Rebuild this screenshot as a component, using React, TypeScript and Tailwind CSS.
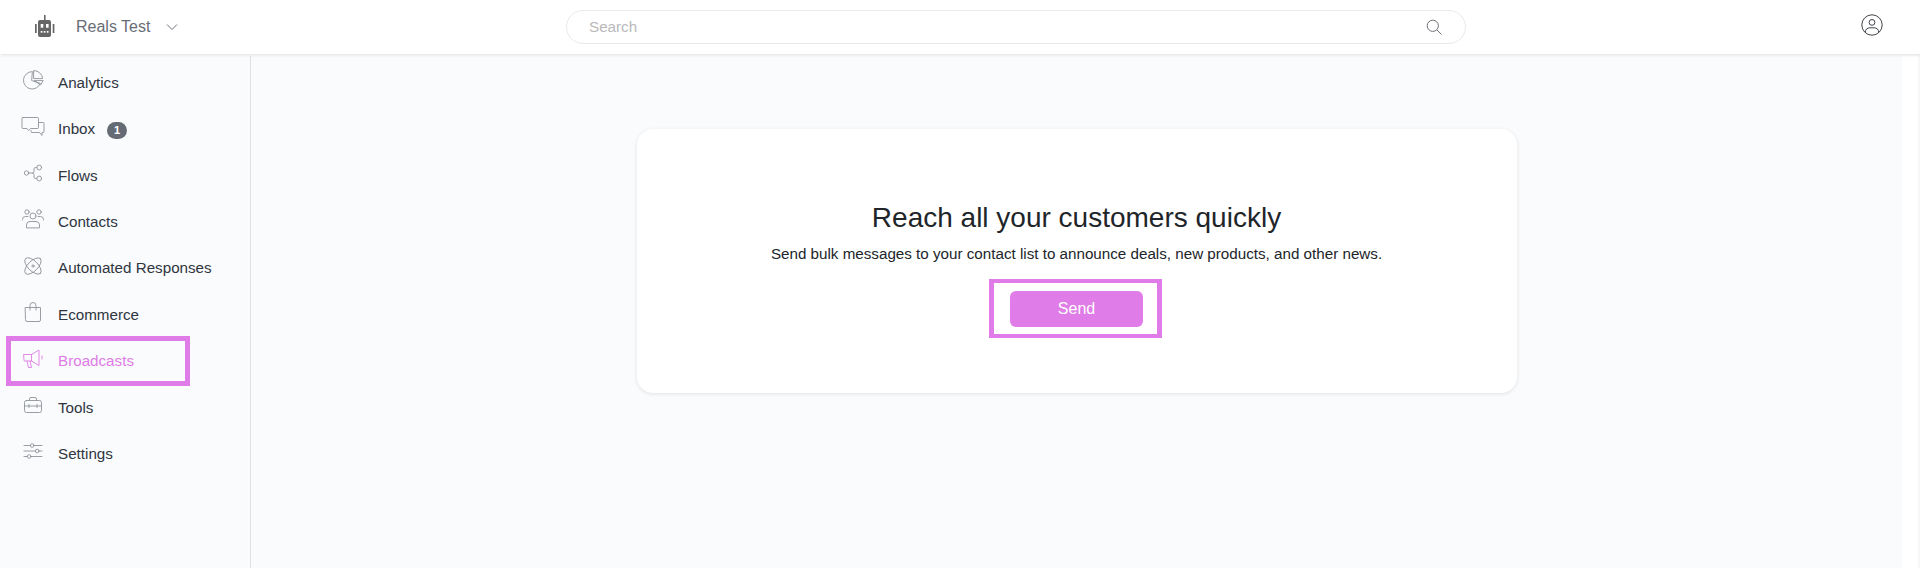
import type { ReactNode } from "react";

const sans = "font-['Liberation_Sans',Arial,sans-serif]";

function Icon({ children, className = "" }: { children: ReactNode; className?: string }) {
  return (
    <svg
      viewBox="0 0 24 24"
      fill="none"
      stroke="currentColor"
      strokeWidth={0.9}
      strokeLinecap="round"
      strokeLinejoin="round"
      className={`w-6 h-6 shrink-0 ${className}`}
    >
      {children}
    </svg>
  );
}

const navItems: { label: string; badge?: string; active?: boolean; icon: ReactNode }[] = [
  {
    label: "Analytics",
    icon: (
      <>
        <path d="M11 3.6A8.7 8.7 0 1 0 19.3 15.4L11 12.6Z" />
        <path d="M13 2.6A8.6 8.6 0 0 1 21.6 10.6H13Z" />
        <path d="M13.4 12.6H22.2L19.8 16.6Z" />
      </>
    ),
  },
  {
    label: "Inbox",
    badge: "1",
    icon: (
      <>
        <path d="M2 2.5H16.5Q17.5 2.5 17.5 3.5V12.5Q17.5 13.5 16.5 13.5H9.5L7.5 15.5L6 13.5H2Q1 13.5 1 12.5V3.5Q1 2.5 2 2.5Z" />
        <path d="M18 7.5H22Q23 7.5 23 8.5V16.5Q23 17.5 22 17.5H21V20.5L18.5 17.5H11Q10 17.5 10 16.5V15.5" />
      </>
    ),
  },
  {
    label: "Flows",
    icon: (
      <>
        <circle cx="5.5" cy="12" r="2.2" />
        <circle cx="18.2" cy="6.5" r="2.4" />
        <circle cx="18.2" cy="17.5" r="2.4" />
        <path d="M7.7 12H11.5Q13 12 13 10.5V8Q13 6.5 14.5 6.5H15.8" />
        <path d="M11.5 12Q13 12 13 13.5V16Q13 17.5 14.5 17.5H15.8" />
      </>
    ),
  },
  {
    label: "Contacts",
    icon: (
      <>
        <circle cx="6" cy="5" r="2.2" />
        <circle cx="18" cy="5" r="2.2" />
        <circle cx="12" cy="9" r="3" />
        <path d="M1.5 13V12.5Q1.5 9.5 4.5 9.5H7" />
        <path d="M22.5 13V12.5Q22.5 9.5 19.5 9.5H17" />
        <path d="M5.5 20.5V18Q5.5 14.5 9 14.5H15Q18.5 14.5 18.5 18V20.5Z" />
      </>
    ),
  },
  {
    label: "Automated Responses",
    icon: (
      <>
        <ellipse cx="12" cy="12" rx="10.5" ry="5" transform="rotate(45 12 12)" />
        <ellipse cx="12" cy="12" rx="10.5" ry="5" transform="rotate(-45 12 12)" />
        <circle cx="12" cy="12" r="1.1" />
      </>
    ),
  },
  {
    label: "Ecommerce",
    icon: (
      <>
        <path d="M4.5 7.5H19.5V20Q19.5 21.5 18 21.5H6Q4.5 21.5 4.5 20Z" />
        <path d="M9 10V5.5Q9 2.5 12 2.5Q15 2.5 15 5.5V10" />
      </>
    ),
  },
  {
    label: "Broadcasts",
    active: true,
    icon: (
      <>
        <path d="M3 7.5H10.5L18 3V18.5L10.5 14H3.5Q3 14 3 13.5Z" />
        <path d="M10.5 7.5V14" />
        <path d="M6 14L7.5 20.5H10.5L9 14" />
        <path d="M21 9V12" />
      </>
    ),
  },
  {
    label: "Tools",
    icon: (
      <>
        <rect x="3.5" y="7.5" width="17" height="12" rx="2" />
        <path d="M8.5 7.5V6Q8.5 4.5 10 4.5H14Q15.5 4.5 15.5 6V7.5" />
        <path d="M3.5 13H20.5" />
        <path d="M8 11.5V14.5M16 11.5V14.5" />
      </>
    ),
  },
  {
    label: "Settings",
    icon: (
      <>
        <path d="M3 6.5H9.5M13 6.5H21" />
        <circle cx="11.2" cy="6.5" r="1.8" />
        <path d="M3 12H14.5M18 12H21" />
        <circle cx="16.2" cy="12" r="1.8" />
        <path d="M3 17.5H6.5M10 17.5H21" />
        <circle cx="8.2" cy="17.5" r="1.8" />
      </>
    ),
  },
];

function Header() {
  return (
    <header className="relative z-10 h-[54px] shrink-0 bg-white shadow-[0_1px_3px_rgba(0,0,0,0.14)] flex items-center pl-[33px] pr-[37px]">
      <div className="flex items-center w-[533px]">
        <svg viewBox="0 0 24 24" className="w-6 h-6 text-[#666666]" fill="currentColor">
          <rect x="11" y="0" width="1.6" height="5" />
          <rect x="5" y="5" width="13" height="17" rx="2" />
          <rect x="2" y="9" width="1.7" height="9" />
          <rect x="19.7" y="9" width="1.7" height="9" />
          <rect x="7.7" y="9" width="2.6" height="3.7" fill="#ffffff" />
          <rect x="13" y="9" width="2.6" height="3.7" fill="#ffffff" />
          <rect x="7.7" y="16" width="1.7" height="1.7" fill="#ffffff" />
          <rect x="10.7" y="16" width="1.7" height="1.7" fill="#ffffff" />
          <rect x="13.8" y="16" width="1.7" height="1.7" fill="#ffffff" />
        </svg>
        <span className="ml-[19px] text-base text-[#686d75]">Reals Test</span>
        <svg viewBox="0 0 12 8" className="ml-[16px] w-3 h-2 text-[#6b7078]" fill="none" stroke="currentColor" strokeWidth={1}>
          <path d="M1 1.5L6 6.5L11 1.5" />
        </svg>
      </div>
      <div className="w-[900px] h-[34px] rounded-full border border-[#e9e9ea] flex items-center justify-between pl-[22px] pr-[23px]">
        <span className="text-[15.2px] text-[#b9b9bb]">Search</span>
        <svg viewBox="0 0 16 16" className="w-4 h-4 text-[#6f7278]" fill="none" stroke="currentColor" strokeWidth={1}>
          <circle cx="6.8" cy="6.8" r="5.6" />
          <path d="M11 11L15.5 15.5" />
        </svg>
      </div>
      <div className="flex-1 flex justify-end">
        <svg viewBox="0 0 22 22" className="w-[22px] h-[22px] mb-[4px] text-[#3e4248]" fill="none" stroke="currentColor" strokeWidth={1}>
          <circle cx="11" cy="11" r="10.2" />
          <circle cx="11" cy="8.4" r="2.9" />
          <path d="M4.2 18.2Q4.8 13.8 9 13.8H13Q17.2 13.8 17.8 18.2" />
        </svg>
      </div>
    </header>
  );
}

function Sidebar() {
  return (
    <aside className="w-[251px] shrink-0 bg-[#f9fbfc] border-r border-[#dfe0e3] mt-[2px] pt-[4px]">
      {navItems.map((item) => (
        <div
          key={item.label}
          className={`relative h-[46.4px] flex items-center pl-[21px] text-[15.2px] ${
            item.active ? "text-[#e07ce7]" : "text-[#30353f]"
          }`}
        >
          <Icon className={`mb-[6px] ${item.active ? "text-[#e07ce7]" : "text-[#8f9298]"}`}>{item.icon}</Icon>
          <span className="ml-[13px]">{item.label}</span>
          {item.badge && (
            <span className="ml-3 mt-[2px] w-5 h-[17px] rounded-full bg-[#656b75] text-white text-[11px] font-bold flex items-center justify-center">
              {item.badge}
            </span>
          )}
          {/* pink annotation frame drawn over the row */}
          {item.active && (
            <div className="absolute left-[6px] top-[-2px] w-[184px] h-[50px] border-[5px] border-[#e07ce7]" />
          )}
        </div>
      ))}
    </aside>
  );
}

export default function App() {
  return (
    <div className={`h-[568px] w-full flex flex-col bg-white overflow-hidden ${sans}`}>
      <Header />
      <div className="flex-1 flex min-h-0">
        <Sidebar />
        <main className="flex-1 bg-[#f9fbfc] mt-[2px] pt-[73px] flex justify-center">
          <section className="w-[880px] h-[264px] bg-white rounded-2xl shadow-[0_1px_4px_rgba(0,0,0,0.1)] flex flex-col items-center pt-[69px]">
            <h1 className="text-[28px] leading-[40px] text-[#212529]">Reach all your customers quickly</h1>
            <p className="mt-[5px] text-[15.2px] leading-[22px] text-[#212529]">
              Send bulk messages to your contact list to announce deals, new products, and other news.
            </p>
            <div className="mt-[14px] mr-[2px] w-[173px] h-[59px] border-x-[5px] border-y-4 border-[#e07ce7] flex items-center justify-center pl-[2px]">
              <button
                type="button"
                className="w-[133px] h-9 pt-px rounded-md bg-[#e07ce7] text-white text-base"
              >
                Send
              </button>
            </div>
          </section>
        </main>
        <div className="w-[16px] shrink-0 bg-white" />
        <div className="w-[2px] shrink-0 bg-[#f7f7f7]" />
      </div>
    </div>
  );
}
